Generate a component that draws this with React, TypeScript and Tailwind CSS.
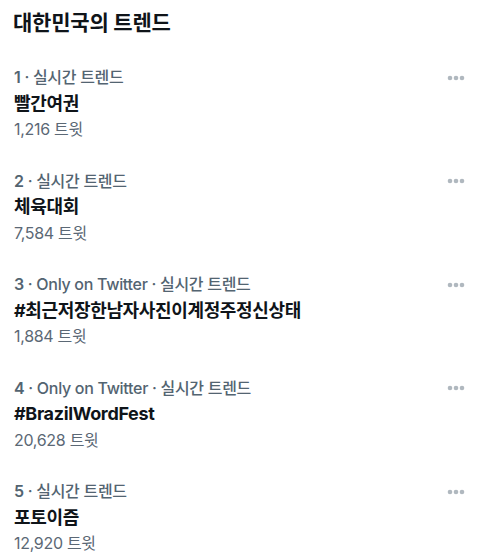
import React from "react";

type Trend = { rank: string; meta: string; title: string; count: string };

const trends: Trend[] = [
  { rank: "1", meta: " · 실시간 트렌드", title: "빨간여권", count: "1,216 트윗" },
  { rank: "2", meta: " · 실시간 트렌드", title: "체육대회", count: "7,584 트윗" },
  { rank: "3", meta: " · Only on Twitter · 실시간 트렌드", title: "#최근저장한남자사진이계정주정신상태", count: "1,884 트윗" },
  { rank: "4", meta: " · Only on Twitter · 실시간 트렌드", title: "#BrazilWordFest", count: "20,628 트윗" },
  { rank: "5", meta: " · 실시간 트렌드", title: "포토이즘", count: "12,920 트윗" },
];

function Dots() {
  return (
    <svg width="18" height="6" viewBox="0 0 18 6" className="block">
      <circle cx="3" cy="3" r="2.3" fill="#b0b8bf" />
      <circle cx="9" cy="3" r="2.3" fill="#b0b8bf" />
      <circle cx="15" cy="3" r="2.3" fill="#b0b8bf" />
    </svg>
  );
}

export default function App() {
  return (
    <div
      className="w-[480px] h-[556px] bg-white overflow-hidden"
      style={{ fontFamily: 'Inter, "Noto Sans CJK KR", sans-serif' }}
    >
      <div className="h-[46px] flex items-center px-[13px]">
        <h1 className="text-[21px] font-bold text-[#0f1419] tracking-[-0.2px]">대한민국의 트렌드</h1>
      </div>
      <div className="pt-[5.5px]">
        {trends.map((t) => (
          <div key={t.title} className="relative py-[12.75px] px-[14px]">
            <div className="h-[26px] flex items-center text-[16px] font-medium text-[#536471] tracking-[-0.3px] whitespace-pre">
              <span className="font-semibold">{t.rank}</span>
              {t.meta}
            </div>
            <div className="h-[26px] flex items-center text-[18px] font-bold text-[#0f1419] tracking-[-0.35px]">{t.title}</div>
            <div className="h-[26px] flex items-center text-[16px] text-[#5b6875] tracking-[-0.3px]">{t.count}</div>
            <div className="absolute right-[15px] top-[23px]">
              <Dots />
            </div>
          </div>
        ))}
      </div>
    </div>
  );
}
